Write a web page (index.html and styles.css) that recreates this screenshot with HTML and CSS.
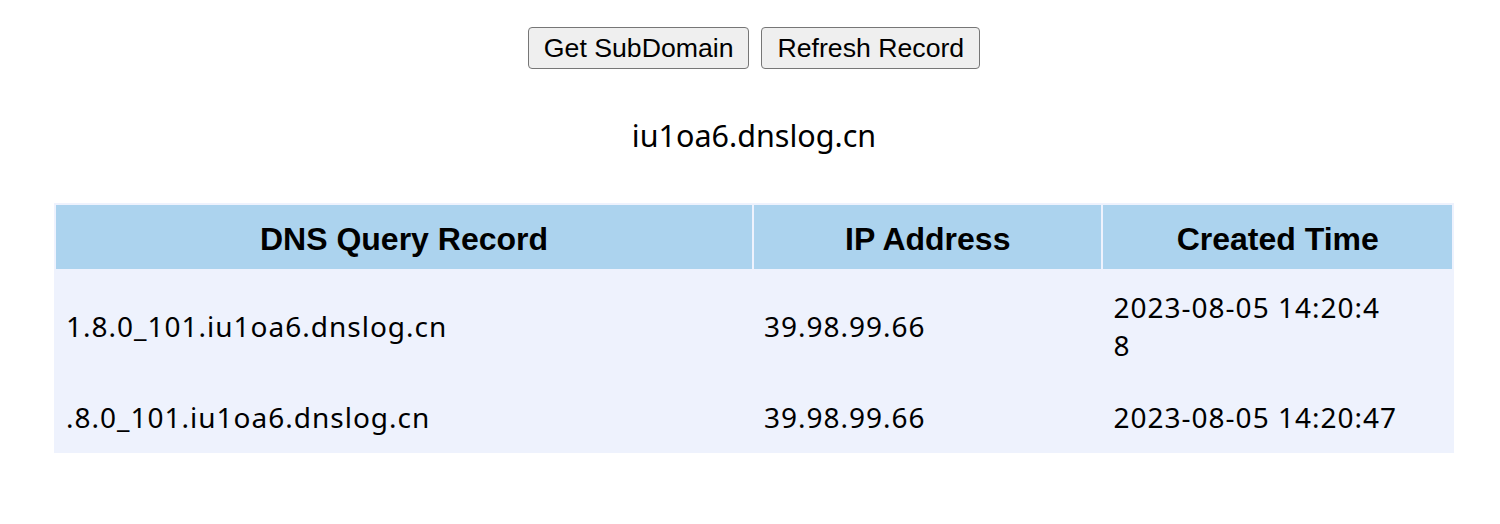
FILE: index.html
```html
<!DOCTYPE html>
<html>
<head>
<meta charset="utf-8">
<link rel="stylesheet" href="styles.css">
</head>
<body>
<div class="page">
  <div class="actions">
    <button class="btn">Get SubDomain</button>
    <button class="btn">Refresh Record</button>
  </div>
  <div class="domain">iu1oa6.dnslog.cn</div>
  <table class="records">
    <thead>
      <tr>
        <th class="c1">DNS Query Record</th>
        <th class="c2">IP Address</th>
        <th class="c3">Created Time</th>
      </tr>
    </thead>
    <tbody>
      <tr>
        <td>1.8.0_101.iu1oa6.dnslog.cn</td>
        <td>39.98.99.66</td>
        <td>2023-08-05 14:20:4<br>8</td>
      </tr>
      <tr>
        <td>.8.0_101.iu1oa6.dnslog.cn</td>
        <td>39.98.99.66</td>
        <td>2023-08-05 14:20:47</td>
      </tr>
    </tbody>
  </table>
</div>
</body>
</html>
```
FILE: styles.css
```css
html, body {
  margin: 0;
  padding: 0;
  background: #ffffff;
}
body {
  padding-left: 8px;
  font-family: "Noto Sans", "Liberation Sans", sans-serif;
  color: #000;
}
.page {
  display: flex;
  flex-direction: column;
  align-items: center;
}
.actions {
  margin-top: 27px;
  display: flex;
  gap: 12px;
}
.btn {
  font-family: "Liberation Sans", Arial, sans-serif;
  font-size: 26.67px;
  height: 42px;
  padding: 0 15px;
  background: #efefef;
  border: 1.5px solid #767676;
  border-radius: 4px;
  color: #000;
}
.domain {
  margin-top: 46px;
  font-size: 30.5px;
  line-height: 40px;
  height: 40px;
}
.records {
  margin-top: 48px;
  width: 1400px;
  border-collapse: separate;
  border-spacing: 2px;
  background: #eef2fd;
}
.records th {
  background: #acd3ee;
  font-family: "Liberation Sans", Arial, sans-serif;
  font-weight: bold;
  font-size: 32px;
  line-height: 38px;
  padding: 15px 10px 11px;
}
.c1 { width: 675px; }
.c2 { width: 327px; }
.c3 { width: 328px; }
.records td {
  font-size: 28px;
  letter-spacing: 1px;
  line-height: 38px;
  padding: 17px 10px 15px;
  text-align: left;
  vertical-align: middle;
}
```
